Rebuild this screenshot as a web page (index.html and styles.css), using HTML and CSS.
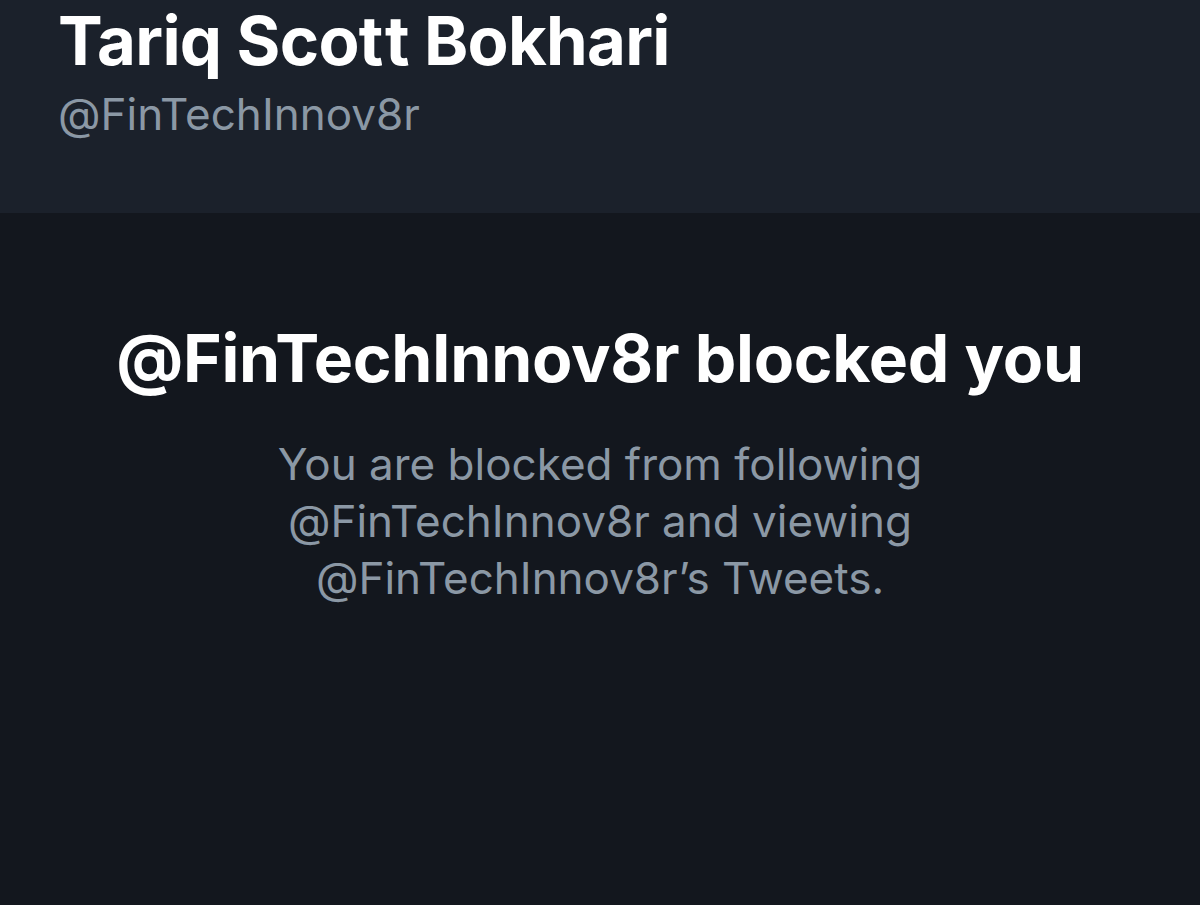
FILE: index.html
```html
<!DOCTYPE html>
<html lang="en">
<head>
<meta charset="utf-8">
<title>Blocked</title>
<link rel="stylesheet" href="styles.css">
</head>
<body>
<header class="profile">
  <h1 class="name">Tariq Sco<span class="t-gap">t</span>t Bokhari</h1>
  <div class="handle">@FinTechInnov8r</div>
</header>
<main class="blocked">
  <h2 class="title">@FinTechInnov8r blocked you</h2>
  <p class="desc">You are blocked from following<br>@FinTechInnov8r and viewing<br>@FinTechInnov8r’s Tweets.</p>
</main>
</body>
</html>
```
FILE: styles.css
```css
html, body {
  margin: 0;
  padding: 0;
  height: 100%;
}
body {
  background: #13171e;
  font-family: Inter, "Noto Sans", "Liberation Sans", sans-serif;
  font-variant-ligatures: none;
  font-feature-settings: "liga" 0, "calt" 0;
  -webkit-font-smoothing: antialiased;
}
.profile {
  background: #1b212b;
  height: 213px;
  box-sizing: border-box;
  padding: 0 0 0 58px;
}
.name {
  margin: 0;
  color: #ffffff;
  font-size: 67px;
  font-weight: 700;
  line-height: 81px;
  letter-spacing: -0.7px;
}
.t-gap {
  letter-spacing: 1.5px;
}
.handle {
  color: #8b98a5;
  font-size: 44px;
  font-weight: 400;
  line-height: 54px;
  margin-top: 6px;
}
.blocked {
  text-align: center;
  padding-top: 105px;
}
.title {
  margin: 0;
  color: #ffffff;
  font-size: 66px;
  font-weight: 700;
  line-height: 80px;
  letter-spacing: -0.3px;
}
.desc {
  margin: 38px 0 0;
  color: #8b98a5;
  font-size: 44px;
  font-weight: 400;
  line-height: 57px;
}
```
